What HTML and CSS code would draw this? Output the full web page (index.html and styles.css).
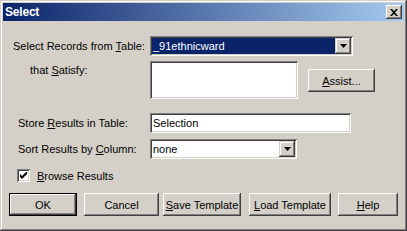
FILE: index.html
```html
<!DOCTYPE html>
<html>
<head>
<meta charset="utf-8">
<link rel="stylesheet" href="styles.css">
</head>
<body>
<div class="window">
  <div class="titlebar">
    <span class="title">Select</span>
    <span class="close"><svg width="8" height="7" viewBox="0 0 8 7"><path d="M0 0h2l2 2.3L6 0h2L5 3.5 8 7H6L4 4.7 2 7H0l3-3.5z" fill="#000"/></svg></span>
  </div>
  <div class="content">
    <div class="row r1">
      <span class="label l1">Select Records from <u>T</u>able:</span>
      <div class="combo wide">
        <span class="value sel">_91ethnicward</span>
        <span class="drop"><svg width="7" height="4" viewBox="0 0 7 4"><path d="M0 0h7L3.5 4z" fill="#000"/></svg></span>
      </div>
    </div>
    <div class="row r2">
      <span class="label l2">that <u>S</u>atisfy:</span>
      <div class="area"></div>
      <span class="btn assist"><u>A</u>ssist...</span>
    </div>
    <div class="row r3">
      <span class="label l3">Store <u>R</u>esults in Table:</span>
      <div class="field">Selection</div>
    </div>
    <div class="row r4">
      <span class="label l3">Sort Results by <u>C</u>olumn:</span>
      <div class="combo narrow">
        <span class="value">none</span>
        <span class="drop"><svg width="7" height="4" viewBox="0 0 7 4"><path d="M0 0h7L3.5 4z" fill="#000"/></svg></span>
      </div>
    </div>
    <div class="row r5">
      <span class="check"><svg width="7" height="7" viewBox="0 0 7 7"><path d="M0 2v3l2 2 5-5V-1L2 4z" fill="#000"/></svg></span>
      <span class="checklabel"><u>B</u>rowse Results</span>
    </div>
    <div class="buttons">
      <span class="btn def b-ok">OK</span>
      <span class="btn b-cancel">Cancel</span>
      <span class="btn b-save"><u>S</u>ave Template</span>
      <span class="btn b-load"><u>L</u>oad Template</span>
      <span class="btn b-help"><u>H</u>elp</span>
    </div>
  </div>
</div>
</body>
</html>
```

FILE: styles.css
```css
body {
  margin: 0;
  background: #d4d0c8;
  font: 11px "Liberation Sans", Arial, sans-serif;
  color: #000;
}
u { text-decoration: underline; text-underline-offset: 1px; }
.window {
  width: 407px;
  height: 231px;
  box-sizing: border-box;
  padding: 3px;
  background: #d4d0c8;
  box-shadow: inset -1px -1px #404040, inset 1px 1px #d4d0c8, inset -2px -2px #808080, inset 2px 2px #fff;
  display: flex;
  flex-direction: column;
}
.titlebar {
  height: 18px;
  background: linear-gradient(to right, #0a246a, #a6caf0);
  display: flex;
  align-items: center;
  justify-content: space-between;
  padding: 0 2px;
}
.title {
  color: #fff;
  font-weight: bold;
  font-size: 12px;
  letter-spacing: -0.2px;
}
.close {
  width: 16px;
  height: 14px;
  background: #d4d0c8;
  box-shadow: inset -1px -1px #404040, inset 1px 1px #fff, inset -2px -2px #808080, inset 2px 2px #d4d0c8;
  display: flex;
  align-items: center;
  justify-content: center;
}
.content {
  display: flex;
  flex-direction: column;
}
.row { display: flex; align-items: center; }
.label { width: 147px; box-sizing: border-box; white-space: nowrap; }
.l1 { padding-left: 10px; }
.l2 { padding-left: 27px; }
.l3 { padding-left: 15px; }
.r1 { margin-top: 15px; }
.r2 { margin-top: 5px; align-items: flex-start; }
.r2 .label { padding-top: 3px; }
.r3 { margin-top: 14px; }
.r4 { margin-top: 6px; }
.r5 { margin-top: 10px; padding-left: 14px; }
.combo, .area, .field {
  box-sizing: border-box;
  background: #fff;
  box-shadow: inset 1px 1px #808080, inset -1px -1px #fff, inset 2px 2px #404040, inset -2px -2px #d4d0c8;
}
.combo {
  height: 20px;
  padding: 2px;
  display: flex;
}
.wide { width: 203px; }
.narrow { width: 147px; }
.value {
  flex: 1;
  display: flex;
  align-items: center;
  padding-left: 1px;
}
.sel { background: #0a246a; color: #fff; }
.drop {
  width: 16px;
  background: #d4d0c8;
  box-shadow: inset -1px -1px #404040, inset 1px 1px #d4d0c8, inset -2px -2px #808080, inset 2px 2px #fff;
  display: flex;
  align-items: center;
  justify-content: center;
}
.area { width: 148px; height: 38px; }
.field {
  width: 201px;
  height: 20px;
  padding-left: 3px;
  display: flex;
  align-items: center;
}
.btn {
  box-sizing: border-box;
  height: 23px;
  background: #d4d0c8;
  box-shadow: inset -1px -1px #404040, inset 1px 1px #fff, inset -2px -2px #808080, inset 2px 2px #d4d0c8;
  display: flex;
  align-items: center;
  justify-content: center;
  white-space: nowrap;
}
.def {
  box-shadow: inset 0 0 0 1px #000, inset -2px -2px #404040, inset 2px 2px #fff, inset -3px -3px #808080;
}
.assist { width: 67px; margin-left: 10px; margin-top: 8px; }
.check {
  width: 13px;
  height: 13px;
  box-sizing: border-box;
  background: #fff;
  box-shadow: inset 1px 1px #808080, inset -1px -1px #fff, inset 2px 2px #404040, inset -2px -2px #d4d0c8;
  display: flex;
  align-items: center;
  justify-content: center;
}
.checklabel { margin-left: 7px; }
.buttons {
  display: flex;
  margin-top: 11px;
  padding-left: 6px;
}
.b-ok { width: 68px; }
.b-cancel { width: 75px; margin-left: 7px; }
.b-save { width: 78px; margin-left: 4px; }
.b-load { width: 82px; margin-left: 8px; }
.b-help { width: 60px; margin-left: 7px; }
```
